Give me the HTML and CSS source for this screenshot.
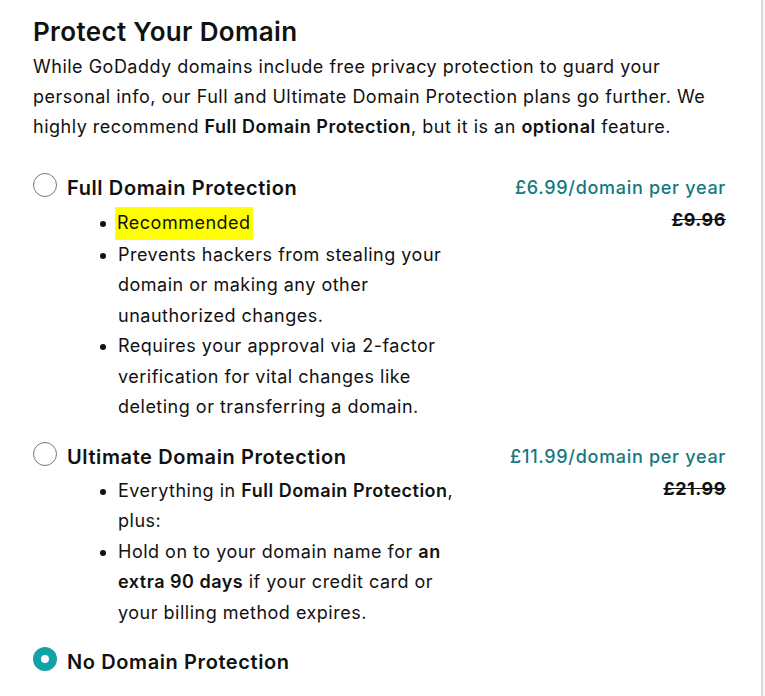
FILE: index.html
```html
<!DOCTYPE html>
<html>
<head>
    <title>Protect Your Domain</title>
    <link rel="stylesheet" href="styles.css">
</head>
<body>
    <div class="panel">
        <h1>Protect Your Domain</h1>
        <p class="intro">
            While GoDaddy domains include free privacy protection to guard your
            personal info, our Full and Ultimate Domain Protection plans go further. We
            highly recommend <strong>Full Domain Protection</strong>, but it is an <strong>optional</strong> feature.
        </p>

        <div class="options">
            <label class="option">
                <span class="radio"></span>
                <div class="option-body">
                    <div class="option-title">Full Domain Protection</div>
                    <ul>
                        <li><span class="highlight">Recommended</span></li>
                        <li>Prevents hackers from stealing your domain or making any other unauthorized changes.</li>
                        <li>Requires your approval via 2-factor verification for vital changes like deleting or transferring a domain.</li>
                    </ul>
                </div>
                <div class="price">
                    <div class="price-now">£6.99/domain per year</div>
                    <div class="price-was">£9.96</div>
                </div>
            </label>

            <label class="option">
                <span class="radio"></span>
                <div class="option-body">
                    <div class="option-title">Ultimate Domain Protection</div>
                    <ul>
                        <li>Everything in <strong>Full Domain Protection</strong>, plus:</li>
                        <li>Hold on to your domain name for <strong>an extra 90 days</strong> if your credit card or your billing method expires.</li>
                    </ul>
                </div>
                <div class="price">
                    <div class="price-now">£11.99/domain per year</div>
                    <div class="price-was">£21.99</div>
                </div>
            </label>

            <label class="option">
                <span class="radio checked"></span>
                <div class="option-body">
                    <div class="option-title">No Domain Protection</div>
                </div>
            </label>
        </div>
    </div>
</body>
</html>
```

FILE: styles.css
```css
:root {
    --text: #111111;
    --teal: #13797e;
    --teal-radio: #11a3a6;
    --radio-border: #777777;
    --divider: #d5d9dd;
}

* {
    margin: 0;
    padding: 0;
    box-sizing: border-box;
}

html, body {
    height: 100%;
}

body {
    font-family: 'Inter', 'Noto Sans', sans-serif;
    color: var(--text);
    background: #f4f6f7;
    font-size: 18px;
    letter-spacing: 0.5px;
}

.panel {
    width: 763px;
    min-height: 100%;
    background: #fff;
    border-right: 2px solid var(--divider);
    padding: 15px 35px 0 33px;
}

h1 {
    font-size: 26px;
    font-weight: 600;
    line-height: 34px;
    letter-spacing: 0.35px;
}

.intro {
    margin-top: 3px;
    line-height: 30px;
}

.intro strong {
    font-weight: 600;
}

.options {
    margin-top: 31px;
    display: flex;
    flex-direction: column;
    gap: 19px;
}

.option {
    display: grid;
    grid-template-columns: 24px 1fr auto;
    column-gap: 10px;
    cursor: pointer;
}

.radio {
    width: 24px;
    height: 24px;
    border-radius: 50%;
    border: 1.5px solid var(--radio-border);
    background: #fff;
}

.radio.checked {
    border: 8px solid var(--teal-radio);
}

.option-title {
    font-size: 20px;
    font-weight: 600;
    line-height: 30px;
    letter-spacing: 0.6px;
}

.option-body ul {
    margin-top: 4px;
    padding-left: 51px;
    max-width: 400px;
    line-height: 30.5px;
}

.option-body strong {
    font-weight: 600;
}

.highlight {
    display: inline-block;
    background: #ffff00;
    padding: 1px 2px;
    margin-left: -3px;
}

.price {
    text-align: right;
}

.price-now {
    color: var(--teal);
    font-weight: 500;
    line-height: 30px;
    letter-spacing: 0.7px;
}

.price-was {
    font-weight: 700;
    text-decoration: line-through;
    line-height: 30px;
    margin-top: 2px;
}
```
